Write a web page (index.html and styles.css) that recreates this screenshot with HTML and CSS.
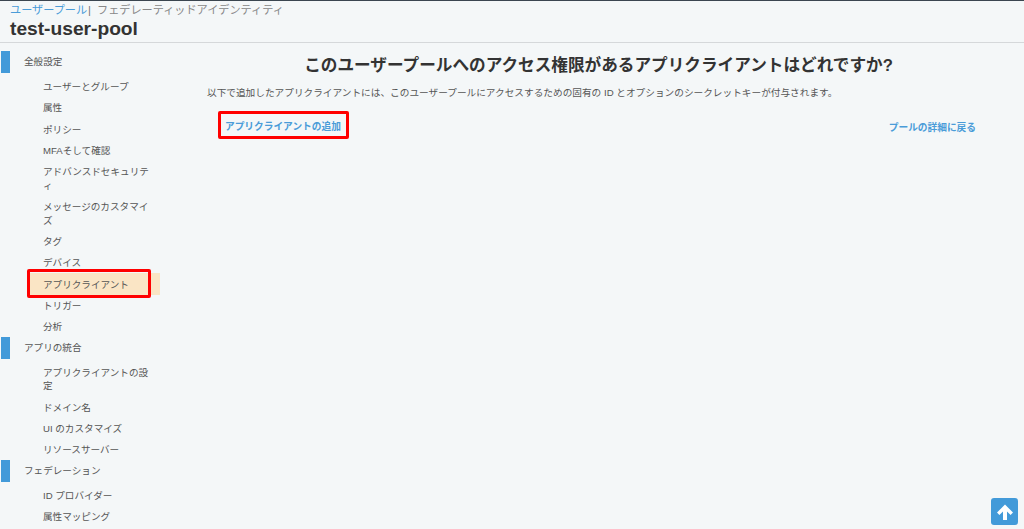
FILE: index.html
```html
<!DOCTYPE html>
<html lang="ja">
<head>
<meta charset="utf-8">
<title>test-user-pool</title>
<link rel="stylesheet" href="styles.css">
</head>
<body>
<header class="head">
  <div class="tabs"><a class="tab-link">ユーザープール</a><span class="tab-sep">|</span><span class="tab-off">フェデレーティッドアイデンティティ</span></div>
  <h1 class="pool">test-user-pool</h1>
</header>
<div class="layout">
  <nav class="side">
    <div class="group">全般設定</div>
    <a class="item">ユーザーとグループ</a>
    <a class="item">属性</a>
    <a class="item">ポリシー</a>
    <a class="item">MFAそして確認</a>
    <a class="item">アドバンスドセキュリティ</a>
    <a class="item">メッセージのカスタマイズ</a>
    <a class="item">タグ</a>
    <a class="item">デバイス</a>
    <a class="item active">アプリクライアント<span class="mark mark-nav"></span></a>
    <a class="item">トリガー</a>
    <a class="item">分析</a>
    <div class="group">アプリの統合</div>
    <a class="item">アプリクライアントの設定</a>
    <a class="item">ドメイン名</a>
    <a class="item">UI のカスタマイズ</a>
    <a class="item">リソースサーバー</a>
    <div class="group">フェデレーション</div>
    <a class="item">ID プロバイダー</a>
    <a class="item">属性マッピング</a>
  </nav>
  <main class="main">
    <h2 class="title">このユーザープールへのアクセス権限があるアプリクライアントはどれですか?</h2>
    <p class="lead">以下で追加したアプリクライアントには、このユーザープールにアクセスするための固有の ID とオプションのシークレットキーが付与されます。</p>
    <div class="actions">
      <a class="add">アプリクライアントの追加<span class="mark mark-add"></span></a>
      <a class="back">プールの詳細に戻る</a>
    </div>
  </main>
</div>
<button class="top" aria-label="トップへ">
  <svg viewBox="0 0 20 20" width="20" height="20"><path class="arrow" d="M10 2.5 18 10.6 15.6 13 12 9.4V18H8V9.4L4.4 13 2 10.6Z"/></svg>
</button>
</body>
</html>
```
FILE: styles.css
```css
* { box-sizing: border-box; }
html, body { margin: 0; height: 100%; overflow: hidden; }
body {
  background: #f4f7f8;
  color: #444;
  font-family: "Liberation Sans", "Noto Sans CJK JP", sans-serif;
  font-size: 9.6px;
  position: relative;
}
.head {
  height: 43px;
  padding: 2px 10px 0;
  border-top: 1px solid #3b4650;
  border-bottom: 1px solid #d5d8da;
}
.tabs { font-size: 11.15px; line-height: 14px; display: flex; }
.tab-link { color: #4a9cd8; }
.tab-sep { color: #777; margin: 0 6px 0 1px; }
.tab-off { color: #888; }
.pool { margin: 1px 0 0; font-size: 19.2px; line-height: 22px; font-weight: bold; color: #333; }
.layout { display: flex; }
.side { width: 160px; flex: none; padding-top: 8.3px; }
.group {
  height: 21.33px;
  line-height: 21.33px;
  padding-left: 24px;
  color: #555;
  position: relative;
  margin-bottom: 2.67px;
}
.group::before {
  content: "";
  position: absolute;
  left: 1px; top: 0;
  width: 9px; height: 22px;
  background: #429ad9;
}
.item {
  display: block;
  padding: 4.6px 8px 3.02px 43px;
  line-height: 13.71px;
  color: #555;
  position: relative;
}
.active { background: #fae5c5; margin-left: 28px; padding-left: 15px; }
.mark {
  position: absolute;
  border: 3px solid #f00;
  border-radius: 2px;
}
.mark-nav { left: -1px; top: -4px; width: 124px; height: 29px; }
.main { flex: 1; padding: 12px 48px 0 47px; }
.title {
  margin: 0;
  padding-left: 14px;
  text-align: center;
  font-size: 16.64px;
  line-height: 22px;
  font-weight: bold;
  color: #333;
}
.lead { margin: 9px 0 0; font-size: 9.66px; line-height: 14px; color: #555; }
.actions {
  display: flex;
  justify-content: space-between;
  align-items: center;
  margin-top: 13px;
  padding-left: 18px;
  font-size: 9.7px;
  font-weight: bold;
  color: #4a9cd8;
}
.add { position: relative; padding: 7px 0; line-height: 14px; }
.mark-add { left: -7px; top: -2px; width: 131px; height: 28px; }
.back { font-weight: bold; }
.top {
  position: absolute;
  right: 6px; bottom: 4px;
  width: 27px; height: 27px;
  padding: 0;
  border: 0;
  border-radius: 3px;
  background: #429ad9;
  display: flex;
  align-items: center;
  justify-content: center;
}
.arrow { fill: #fff; }
```
